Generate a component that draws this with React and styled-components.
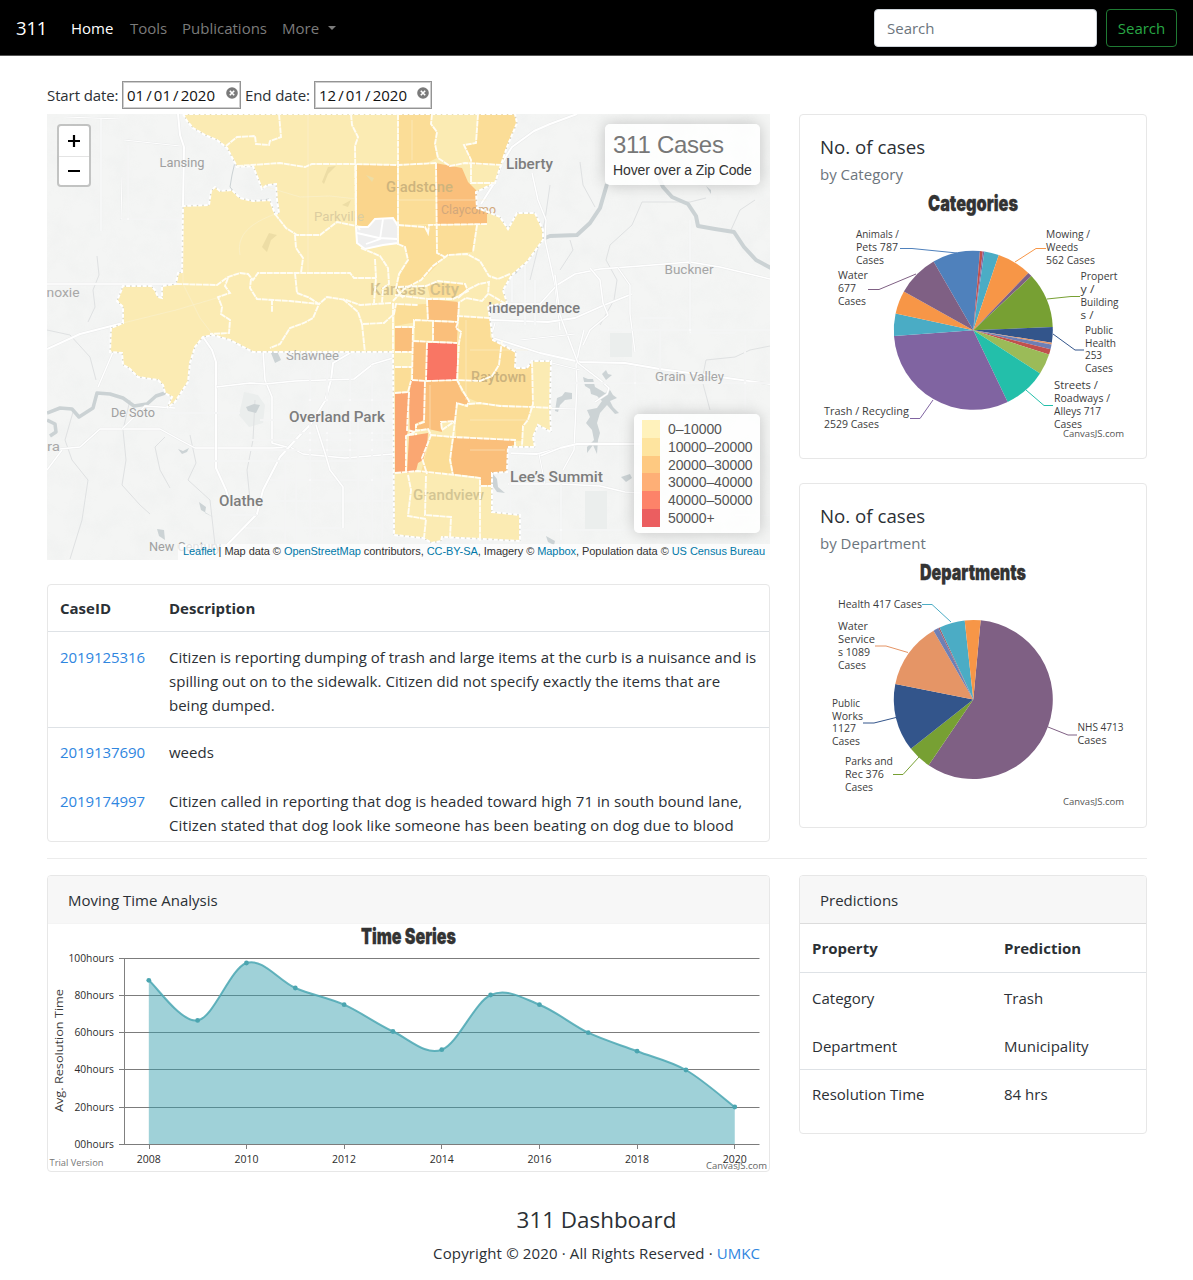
import React from "react";
import styled, { createGlobalStyle } from "styled-components";

const GlobalStyle = createGlobalStyle`
  *, *::before, *::after { box-sizing: border-box; }
  body {
    margin: 0;
    background: #fff;
    color: #2b3035;
    font-family: "Open Sans", "Noto Sans", sans-serif;
    font-size: 15px;
    line-height: 24px;
  }
`;

/* ---------- navigation ---------- */
const Nav = styled.nav`
  display: flex;
  align-items: center;
  height: 56px;
  padding: 0 16px;
  background: #000;
  border-bottom: 1px solid #555;
`;
const Brand = styled.a`
  width: 55px;
  color: #fff;
  font-size: 18.5px;
  letter-spacing: -0.2px;
`;
const NavLinks = styled.div`
  display: flex;
  gap: 16px;
  flex: 1;
`;
const NavLink = styled.a`
  width: ${(p) => p.$w}px;
  white-space: nowrap;
  color: ${(p) => (p.$active ? "#fff" : "#7b7b7b")};
`;
const Caret = styled.span`
  display: inline-block;
  margin-left: 9px;
  vertical-align: 4px;
  border: 4px solid transparent;
  border-top-color: #7b7b7b;
  border-bottom: 0;
`;
const SearchInput = styled.input`
  width: 223px;
  height: 38px;
  margin-right: 9px;
  padding: 0 12px;
  border: 1px solid #ced4da;
  border-radius: 4px;
  font: inherit;
  &::placeholder { color: #6c757d; opacity: 1; }
`;
const SearchButton = styled.button`
  width: 71px;
  height: 38px;
  padding: 0;
  border: 1px solid #1f7a33;
  border-radius: 4px;
  background: transparent;
  color: #28a745;
  font: inherit;
`;

/* ---------- page layout ---------- */
const Page = styled.main`
  padding: 24px 46px 0 47px;
`;
const DateRow = styled.div`
  display: flex;
  align-items: center;
  height: 34px;
  padding-bottom: 4px;
  gap: 4px;
  white-space: nowrap;
`;
const DateLabel = styled.span`
  width: ${(p) => p.$w}px;
  letter-spacing: -0.1px;
`;
const DateBox = styled.div`
  display: flex;
  align-items: center;
  width: ${(p) => p.$w}px;
  height: 28px;
  padding: 0 2px 0 4px;
  border: 1px solid #949494;
  outline: 1px solid #cfcfcf;
  outline-offset: -2px;
  color: #111;
  word-spacing: -1.8px;
`;
const ClearIcon = styled.svg`
  margin-left: auto;
  margin-top: -5px;
`;
const Columns = styled.div`
  display: grid;
  grid-template-columns: 723px 348px;
  column-gap: 29px;
  align-items: start;
`;
const Stack = styled.div`
  display: flex;
  flex-direction: column;
  gap: 24px;
`;
const Divider = styled.hr`
  height: 1px;
  margin: 16px 0;
  border: 0;
  background: #ececec;
`;
const Card = styled.section`
  height: ${(p) => p.$h}px;
  border: 1px solid #e7e7e7;
  border-radius: 4px;
  background: #fff;
  overflow: hidden;
`;
const CardHeader = styled.header`
  height: 48px;
  padding: 12px 20px;
  background: #f7f7f7;
  border-bottom: 1px solid ${(p) => p.$line || "#f4f4f4"};
`;
const CardTitle = styled.h5`
  margin: 0;
  padding: 20px 20px 0;
  font-size: 18.7px;
  font-weight: 400;
  line-height: 24px;
`;
const CardSubtitle = styled.h6`
  margin: 3px 0 1px;
  padding: 0 20px;
  color: #6c757d;
  font-size: 15px;
  font-weight: 400;
  line-height: 24px;
`;
const Drawing = styled.svg`
  display: block;
`;

/* ---------- map ---------- */
const MapFrame = styled.div`
  position: relative;
  height: 446px;
  overflow: hidden;
  font-family: "Liberation Sans", Arial, sans-serif;
`;
const ZoomControl = styled.div`
  position: absolute;
  left: 10px;
  top: 10px;
  width: 34px;
  border: 2px solid rgba(0, 0, 0, 0.2);
  border-radius: 4px;
  background: #fff;
  background-clip: padding-box;
`;
const ZoomButton = styled.div`
  display: flex;
  align-items: center;
  justify-content: center;
  height: ${(p) => p.$h}px;
  padding-bottom: 1px;
  & + & { border-top: 1px solid #e4e4e4; }
`;
const Panel = styled.div`
  position: absolute;
  border-radius: 5px;
  background: rgba(255, 255, 255, 0.84);
  box-shadow: 0 0 15px rgba(0, 0, 0, 0.2);
`;
const InfoPanel = styled(Panel)`
  right: 10px;
  top: 10px;
  width: 155px;
  height: 61px;
  padding: 6px 8px;
  color: #333;
  font-size: 14px;
  line-height: 19px;
  letter-spacing: -0.1px;
  white-space: nowrap;
`;
const InfoTitle = styled.h4`
  margin: 0 0 2px;
  color: #777;
  font-size: 24px;
  font-weight: 400;
  line-height: 29px;
  letter-spacing: -0.25px;
`;
const Legend = styled(Panel)`
  right: 10px;
  bottom: 27px;
  width: 126px;
  height: 119px;
  padding: 6px 8px;
  color: #555;
  font-size: 14px;
  line-height: 18px;
  letter-spacing: -0.1px;
  white-space: nowrap;
`;
const LegendRow = styled.div`
  display: flex;
  gap: 8px;
  height: 17.8px;
`;
const Swatch = styled.i`
  flex: none;
  width: 18px;
  background: ${(p) => p.$color};
  opacity: 0.7;
`;
const Attribution = styled.div`
  position: absolute;
  right: 0;
  bottom: 0;
  height: 16px;
  padding: 0 5px;
  background: rgba(255, 255, 255, 0.7);
  color: #333;
  font-size: 11px;
  line-height: 15px;
  letter-spacing: -0.055px;
  white-space: nowrap;
`;
const MapLink = styled.a`
  color: #0078a8;
`;

/* ---------- tables ---------- */
const Table = styled.div`
  display: flex;
  flex-direction: column;
`;
const Row = styled.div`
  display: grid;
  grid-template-columns: ${(p) => p.$first}px 1fr;
  padding: ${(p) => p.$top ?? 12}px 12px ${(p) => p.$bottom ?? 12}px;
  border-top: 1px solid ${(p) => (p.$line ? "#dee2e6" : "transparent")};
  font-weight: ${(p) => (p.$head ? 700 : 400)};
  letter-spacing: ${(p) => (p.$head ? -0.15 : 0)}px;
`;
const CaseLink = styled.a`
  color: #2f86df;
  letter-spacing: ${(p) => p.$ls || 0}px;
`;
const Text = styled.span`
  white-space: pre;
  margin-right: -12px;
  letter-spacing: ${(p) => p.$ls || 0}px;
`;
const Line = styled.span`
  display: block;
  letter-spacing: ${(p) => p.$ls}px;
`;

/* ---------- footer ---------- */
const Footer = styled.footer`
  padding-top: 33px;
  text-align: center;
  letter-spacing: 0.14px;
`;
const FooterTitle = styled.h4`
  margin: 0 0 7px;
  font-size: 22.4px;
  font-weight: 400;
  line-height: 29px;
  letter-spacing: 0;
`;

/* ---------- map data ---------- */
const LIGHT = "#fbebb3";
const MID = "#fbdd97";
const MID2 = "#fad58c";
const ORANGE = "#fabf7b";
const DEEP = "#faa772";
const RED = "#f97664";

const COVERAGE =
  "183,114 187,121 193,128 205,135 217,140 227,148 235,163 237,167 253,166 262,189 267,185 276,184 277,200 279,213 275,214 270,200 253,201 240,198 232,190 220,191 215,187 211,191 209,205 183,206 182,272 178,273 176,284 162,286 162,298 158,297 155,290 151,286 123,286 117,301 123,307 123,323 111,328 110,352 122,353 123,365 129,368 138,377 158,380 163,385 165,393 172,397 167,408 175,402 188,382 190,363 195,347 203,337 213,335 230,340 253,352 393,352 394,535 423,538 432,543 441,541 442,537 520,541 520,515 492,512 492,473 507,472 508,447 535,447 533,437 538,425 551,432 550,408 551,361 532,361 527,368 515,368 516,352 493,340 490,318 488,306 507,303 503,290 512,275 527,262 543,240 543,230 535,213 517,213 508,229 500,217 488,212 477,208 476,192 495,183 501,165 507,147 517,123 515,114";

const DISTRICTS = [
  [MID, "398,114 432,114 431,124 437,134 435,146 437,158 425,164 398,165"],
  [MID, "478,114 515,114 517,123 507,147 502,165 471,165 464,145 476,144"],
  [MID2, "357,165 397,165 397,221 375,218 368,227 357,225"],
  [MID, "399,165 435,163 437,224 399,225"],
  [ORANGE, "435,163 462,168 468,182 477,191 477,208 487,213 487,224 437,224 437,173"],
  [MID, "398,226 437,225 437,253 445,257 425,277 410,287 397,287 400,275 408,260 405,248 398,244"],
  [MID, "437,225 477,225 473,252 458,253 447,257 437,254"],
  [MID, "427,284 464,283 468,288 458,297 430,297"],
  [MID, "395,305 427,304 427,320 395,326"],
  [ORANGE, "428,299 459,302 457,321 428,320"],
  [MID, "415,321 432,321 432,342 415,341"],
  [ORANGE, "433,322 458,322 457,342 433,341"],
  [ORANGE, "395,327 413,328 412,352 395,352"],
  [ORANGE, "413,342 426,342 426,380 412,380"],
  [RED, "427,343 457,343 457,380 426,380"],
  [MID, "395,367 411,367 410,392 395,392"],
  [DEEP, "395,393 408,393 408,430 406,440 406,473 395,473"],
  [DEEP, "411,380 425,381 424,420 415,424 415,430 410,436 409,400"],
  [DEEP, "409,436 428,433 427,447 423,460 418,463 416,471 407,473"],
  [ORANGE, "425,381 457,381 461,391 469,401 467,406 457,403 455,421 441,422 442,432 428,429 416,429 416,424 424,422"],
  [MID, "459,316 490,318 490,337 493,340 516,352 515,368 527,368 532,361 534,405 528,407 480,403 468,398 460,388 458,370"],
  [MID, "469,404 530,407 530,418 523,427 522,441 456,436 455,420 458,404"],
  [MID, "430,436 453,437 452,475 421,473 424,460 427,450"],
  [ORANGE, "454,437 514,440 514,445 508,447 507,472 492,473 491,485 481,486 480,477 453,474 451,455"],
];

const BORDERS = [
  "279,114 281,137 270,141 269,145 256,144 255,136 237,137 226,146",
  "351,114 352,125 358,137 355,146 356,225 360,230",
  "237,166 280,163 305,167 312,164 350,164 398,165 437,163",
  "398,114 398,245",
  "432,114 431,124 437,132 435,144 438,158 450,166 465,163 503,165",
  "478,114 476,143 464,145 471,160 471,183 495,183",
  "356,164 356,225",
  "436,163 437,253 445,257",
  "398,225 425,227 428,233 429,225 487,224",
  "477,225 473,252",
  "275,214 286,228 297,235 320,235 337,222 356,226",
  "295,235 296,248 303,258 301,273",
  "176,284 217,285 228,277 240,273 248,274 253,280 258,273 350,273 354,278 376,278",
  "295,273 297,293 308,297 319,304 313,318 304,323 290,328 280,344 270,348",
  "228,278 225,286 230,293 218,297 222,307 221,314 230,320 229,333 210,334",
  "251,279 250,288 257,299 290,301 319,304 327,297 346,300 360,305 391,303",
  "272,299 272,312",
  "361,248 380,256 388,268 389,284 383,288 382,303",
  "375,259 376,278 374,303",
  "343,299 358,312 362,324 384,323 394,314 396,304 418,305",
  "362,324 365,353",
  "393,303 393,353",
  "510,274 498,279 489,276 480,261 467,254 448,255 433,266 421,280 404,289 393,301",
  "398,287 426,286 438,281 465,284 468,291 453,299 428,299 395,295",
  "398,244 405,247 408,260 399,274 396,288 403,298",
  "458,298 467,290 479,284 489,282 488,294 482,301 466,298 458,303",
  "489,294 506,304",
  "427,300 428,321",
  "459,302 458,322 456,328 461,332 459,343 457,380 463,391 469,401 467,406 457,403 455,421 441,422 442,430",
  "395,327 414,327 414,320 458,322",
  "457,316 490,318",
  "413,328 412,380",
  "433,321 433,342",
  "413,341 457,343",
  "427,343 426,380",
  "412,380 427,381 457,380 480,381 492,376 499,365 502,340",
  "395,352 412,352",
  "395,367 412,367",
  "395,393 408,392 411,381",
  "409,392 407,430 415,432 406,436 406,473",
  "425,381 424,422 416,425 416,431 428,429 431,435 422,458 427,474",
  "395,473 418,471 455,475 480,478 480,541",
  "408,435 417,434",
  "430,435 453,437 515,440 515,446",
  "442,430 455,421 453,437 450,460 453,475",
  "469,404 480,403 500,406 534,407 552,408",
  "532,361 533,404 528,420 523,426 522,446",
  "426,476 425,515 451,517 450,538",
  "408,475 411,490 408,516 426,519 424,538",
  "481,486 492,486",
];

const ROADS = [
  [2, "47,349 80,334 123,323 176,310 220,297"],
  [1.5, "47,284 176,284"],
  [1.2, "101,118 101,231 M65,117 120,119"],
  [1, "124,140 180,146 M122,177 121,219 180,219 M128,145 128,220"],
  [2, "178,114 180,135 184,147 183,206"],
  [1.4, "60,449 80,447 100,429 160,429 180,440 195,448 273,448 290,447 303,454 345,458 393,454"],
  [2, "203,337 212,350 216,362 216,468 226,490 229,500"],
  [1.6, "263,350 265,380 272,397 272,443 290,448"],
  [2, "350,353 333,363 331,380 325,401 310,425 300,435 280,457 263,490 257,514 222,550"],
  [1.6, "216,387 250,383 265,384 295,381 354,379 373,364 393,358"],
  [1.2, "165,413 240,413 M202,461 393,461 M270,501 393,501 M245,528 343,528 M230,515 257,515"],
  [1, "310,370 310,540 M327,360 327,461 M350,356 350,460 M372,365 372,540 M290,433 393,433 M260,420 393,420 M308,400 393,400 M250,440 390,440 M270,480 390,480 M240,450 393,450"],
  [1.6, "316,425 325,453 330,470 343,487 343,528"],
  [1, "296,460 296,545 M285,460 285,545 M358,420 358,540 M382,400 382,540"],
  [1.4, "47,470 62,450 M98,387 113,352 M122,429 145,406 175,408"],
  [2, "577,114 550,124 534,131 512,147 502,163 495,182 481,204"],
  [1.4, "532,173 538,200 546,220 545,240 555,285 560,330"],
  [1.5, "495,304 540,304 557,285 575,274 600,269 640,266 690,262 720,267 770,279"],
  [1.8, "460,319 548,322 575,318 602,306 632,294"],
  [1.5, "590,268 600,280 603,303 608,315 590,330 583,345"],
  [1.3, "618,268 630,285 630,314 635,352"],
  [1.8, "493,338 540,353 580,362 625,363 660,369 720,377 770,384"],
  [1.4, "584,330 579,350 576,365 577,383 574,450 563,470"],
  [1.5, "555,275 560,315 573,350 578,363 600,380 609,388 607,394 595,402"],
  [1.8, "500,453 537,454 560,448 577,444 640,444"],
  [1.6, "560,448 540,456 M508,484 560,484 600,486 625,492 640,493"],
  [1.1, "561,484 561,540 M539,454 545,484 M500,530 640,530 M640,318 675,318 M690,220 690,333 M690,333 735,333 M600,330 770,330 M535,408 575,409"],
  [1, "570,383 770,383 M635,366 635,415 M660,330 660,415 M510,430 510,530 M540,360 580,370 M735,515 770,515 M745,335 745,412"],
  [1.2, "512,275 512,302 M525,265 525,325 M535,280 535,325 M495,323 490,340 M520,340 575,334"],
];

const RIVERS = [
  [4, "607,184 600,208 590,223 577,235 550,236 540,240 532,252 514,273"],
  [4, "656,171 663,187 672,197 688,204 696,216 698,226 715,229 734,232 744,247 756,260 771,268"],
  [3.5, "47,413 60,408 72,409 79,417 93,408 97,393 110,394 123,398 134,406 147,404 156,396 165,393"],
  [3.5, "47,420 55,424 56,432 50,436"],
  [1, "235,162 232,175 230,187 240,199 255,201 269,199"],
];

const STREAMS = [
  "97,256 99,275 93,290 95,307 88,322",
  "47,330 70,335 90,357 96,380",
  "73,412 65,440 72,460 88,480 82,520 70,559",
  "130,400 123,430 126,460 122,485 140,505 150,514",
  "190,435 196,463 188,480 210,500 215,545",
  "165,437 155,447 160,470 170,488",
  "255,400 253,440 247,470 250,500",
  "580,162 583,185 595,207",
  "706,198 690,202 642,202 632,225 610,245 606,260 617,280 614,300 600,325",
  "550,185 545,220 530,280",
  "731,230 740,210 755,200",
  "770,346 750,350 735,357 706,360 702,380 710,410",
  "570,240 573,250 560,270",
];

const LAKES = [
  "583,377 588,379 593,379 595,387 602,391 605,393 610,390 613,395 617,398 610,401 613,407 619,413 615,414 607,405 600,413 597,423 600,433 598,440 597,454 593,445 587,453 587,447 594,440 592,430 586,423 590,417 587,410 597,408 602,401 597,396 591,394 590,389 585,386",
  "555,411 557,398 562,396 565,392 572,393 572,399 565,400 560,405 558,412",
  "602,374 606,370 608,374 612,375 606,380",
  "493,474 497,479 498,487 505,493 497,492 492,485",
  "269,348 277,351 281,360 275,363",
  "246,407 254,404 260,405 256,413 248,411",
  "199,502 206,507 205,513 213,517 208,514 201,510",
  "157,529 164,530 165,540 159,536",
  "546,536 555,541 554,545 548,542",
  "621,477 630,474 632,478 626,482",
  "706,186 711,190 711,194",
  "178,449 183,451 189,448 187,452 182,454",
];

const PLACES = [
  ["Lansing", 159.5, 167, 45, 13, 400, "#a0a0a0"],
  ["noxie", 46.5, 296.5, 33, 12.5, 400, "#a8a8a8"],
  ["De Soto", 111, 416.5, 44, 12.5, 400, "#a0a0a0"],
  ["ra", 47, 450.5, 13, 12.5, 400, "#a8a8a8"],
  ["Shawnee", 286, 359.5, 53, 12.5, 400, "#a5a5a5"],
  ["New Century", 149, 550.5, 72, 12.5, 400, "#a0a0a0"],
  ["Overland Park", 289, 422, 96, 14.5, 500, "#7d7d7d"],
  ["Olathe", 219, 506, 44, 14.5, 500, "#7d7d7d"],
  ["Liberty", 506, 169, 47, 14.5, 500, "#7d7d7d"],
  ["Independence", 488, 312.5, 92, 14.5, 500, "#7d7d7d"],
  ["Buckner", 664.5, 274, 49, 13, 400, "#a5a5a5"],
  ["Grain Valley", 655, 381, 69, 13, 400, "#a5a5a5"],
  ["Lee’s Summit", 510, 481.5, 93, 14.5, 500, "#7d7d7d"],
  ["Parkville", 314, 221, 50, 12.5, 400, "#dccda0"],
  ["Gladstone", 386, 192, 67, 14, 500, "#cdb47d"],
  ["Claycomo", 441, 214, 55, 12.5, 400, "#d2a87b"],
  ["Kansas City", 370, 295, 89, 17, 500, "#d3c08c"],
  ["Raytown", 471, 382, 55, 14, 500, "#cbb27d"],
  ["Grandview", 413, 500, 71, 14, 500, "#d3c594"],
];

const LEGEND = [
  ["#FFEDA0", "0–10000"],
  ["#FED976", "10000–20000"],
  ["#FEB24C", "20000–30000"],
  ["#FD8D3C", "30000–40000"],
  ["#FC4E2A", "40000–50000"],
  ["#E31A1C", "50000+"],
];

function MapView() {
  return (
    <MapFrame>
      <Drawing width="723" height="446" viewBox="47 114 723 446">
        <defs>
          <filter id="terrain" x="0" y="0" width="100%" height="100%">
            <feTurbulence type="fractalNoise" baseFrequency="0.045" numOctaves="4" seed="7" />
            <feColorMatrix values="0 0 0 0 0.78  0 0 0 0 0.8  0 0 0 0 0.8  0.9 0 0 0 -0.36" />
          </filter>
        </defs>
        <rect x="47" y="114" width="723" height="446" fill="#f4f5f4" />
        <rect x="47" y="114" width="723" height="446" filter="url(#terrain)" opacity="0.45" />
        <path d="M585 491h22v38h-22zM610 333h22v24h-22zM244 392l14 3 7 10-2 18-14 4-10-12z" fill="#ebeeed" />
        {STREAMS.map((d) => (
          <path key={d} d={"M" + d} fill="none" stroke="#dfe1e2" strokeWidth="1" />
        ))}
        {RIVERS.map(([w, d]) => (
          <path key={d} d={"M" + d} fill="none" stroke="#cbd2d4" strokeWidth={w} strokeLinejoin="round" />
        ))}
        {LAKES.map((p) => (
          <polygon key={p} points={p} fill="#ccd3d5" />
        ))}
        {ROADS.map(([w, d]) => (
          <g key={d} fill="none" strokeLinejoin="round">
            <path d={"M" + d} stroke="#e9eaea" strokeWidth={w + 1} />
            <path d={"M" + d} stroke="#fff" strokeWidth={w} />
          </g>
        ))}
        <polygon points={COVERAGE} fill={LIGHT} />
        {DISTRICTS.map(([c, p]) => (
          <polygon key={p} points={p} fill={c} />
        ))}
        <g fill="none" stroke="#f8f2d8" strokeWidth="0.8" opacity="0.6">
          <path d="M123 323L176 310 220 297M183 210V284L200 318 213 335M260 185L300 197 330 196 357 199M240 255C235 230 260 220 275 214M308 114V273M398 200H487M412 120V160M466 320V400M470 350H528M430 385V430M470 420H528M470 450H505" />
        </g>
        <path d="M322 182l6-15 8-1-8 8-4 10zM262 247l7-14 8 2-6 5-4 12zM342 205l9-5-3 7zM366 175l8 3-2 4z" fill="#eddda5" />
        <polygon
          points="356,227 368,227 375,219 393,218 398,226 398,243 383,245 365,249 357,243"
          fill="#efefef"
          stroke="#fff"
          strokeWidth="2"
        />
        <path d="M357 233l22 5 18 1M383 219l-3 20-14 5" fill="none" stroke="#fff" strokeWidth="1.8" />
        {PLACES.map(([t, x, y, w, s, wt, c]) => (
          <text
            key={t}
            x={x}
            y={y}
            textLength={w}
            lengthAdjust="spacingAndGlyphs"
            fontFamily="Roboto, sans-serif"
            fontSize={s}
            fontWeight={wt}
            fill={c}
          >
            {t}
          </text>
        ))}
        <polygon points={COVERAGE} fill="none" stroke="#c9cdcd" strokeWidth="0.8" />
        <polygon points={COVERAGE} fill="none" stroke="#fff" strokeWidth="2" strokeDasharray="4 1.5" />
        {BORDERS.map((p) => (
          <polyline key={p} points={p} fill="none" stroke="#fffdf4" strokeWidth="1.9" strokeDasharray="6 0.7" />
        ))}
      </Drawing>
      <ZoomControl>
        <ZoomButton $h={30}>
          <svg width="12" height="12" viewBox="0 0 12 12" stroke="#000" strokeWidth="2.2">
            <path d="M0 6H12M6 0V12" />
          </svg>
        </ZoomButton>
        <ZoomButton $h={29}>
          <svg width="12" height="12" viewBox="0 0 12 12" stroke="#000" strokeWidth="2">
            <path d="M0 6H12" />
          </svg>
        </ZoomButton>
      </ZoomControl>
      <InfoPanel>
        <InfoTitle>311 Cases</InfoTitle>
        Hover over a Zip Code
      </InfoPanel>
      <Legend>
        {LEGEND.map(([c, t]) => (
          <LegendRow key={t}>
            <Swatch $color={c} />
            {t}
          </LegendRow>
        ))}
      </Legend>
      <Attribution>
        <MapLink>Leaflet</MapLink> | Map data © <MapLink>OpenStreetMap</MapLink> contributors,{" "}
        <MapLink>CC-BY-SA</MapLink>, Imagery © <MapLink>Mapbox</MapLink>, Population data ©{" "}
        <MapLink>US Census Bureau</MapLink>
      </Attribution>
    </MapFrame>
  );
}

/* ---------- charts ---------- */
const CHART_FONT = '"Open Sans", "Noto Sans", sans-serif';

function ChartTitle({ x, y, w, children }) {
  return (
    <text
      x={x}
      y={y}
      textLength={w}
      lengthAdjust="spacingAndGlyphs"
      fontFamily="Inter, sans-serif"
      fontSize="21.5"
      fontWeight="900"
      fill="#333"
      stroke="#333"
      strokeWidth="0.3"
    >
      {children}
    </text>
  );
}

function ChartText({ x, y, w, size = 10.2, color = "#3c3c3c", children }) {
  return (
    <text
      x={x}
      y={y}
      textLength={w}
      lengthAdjust="spacingAndGlyphs"
      fontFamily={CHART_FONT}
      fontSize={size}
      fill={color}
    >
      {children}
    </text>
  );
}

const CX = 973.3;
const R = 79.5;

function slice(cy, from, to) {
  const at = (deg) => {
    const a = (deg * Math.PI) / 180;
    return `${(CX + R * Math.sin(a)).toFixed(2)} ${(cy - R * Math.cos(a)).toFixed(2)}`;
  };
  return `M${CX} ${cy}L${at(from)}A${R} ${R} 0 ${to - from > 180 ? 1 : 0} 1 ${at(to)}Z`;
}

const CATEGORIES = {
  title: ["Categories", 928, 211, 90],
  cy: 330.3,
  slices: [
    [-30, 4.8, "#4f81bc"], [4.8, 6.9, "#c0504e"], [6.9, 8, "#8064a1"], [8, 18.7, "#4bacc5"],
    [18.7, 43.8, "#f79647"], [43.8, 47, "#7f6084"], [47, 87.6, "#77a033"], [87.6, 99, "#33558b"],
    [99, 100.2, "#e59566"], [100.2, 103.7, "#6e7fb5"], [103.7, 107.7, "#c0504e"],
    [107.7, 122.9, "#9bbb58"], [122.9, 154.4, "#23bfaa"], [154.4, 265.9, "#8064a1"],
    [265.9, 282.2, "#4aacc5"], [282.2, 299.2, "#f79647"], [299.2, 330, "#7f6084"],
  ],
  leaders: [
    ["#4f81bc", "900,248.5 912,248.5 957,253"], ["#7f6084", "868,289.5 879,289.5 916,274"],
    ["#f79647", "1046,248.5 1036,248.5 1015,262"], ["#77a033", "1080,296.5 1071,296.5 1047,299"],
    ["#33558b", "1084,350 1075,350 1053,334"], ["#23bfaa", "1053,405.5 1044,405.5 1026,390"],
    ["#8064a1", "910,418.5 920,418.5 933,400"],
  ],
  labels: [
    ["Animals /", 856, 238, 43], ["Pets 787", 856, 251, 42], ["Cases", 856, 264, 28],
    ["Water", 838, 278.5, 30], ["677", 838, 291.5, 18], ["Cases", 838, 304.5, 28],
    ["Mowing /", 1046, 238, 44], ["Weeds", 1046, 251, 32], ["562 Cases", 1046, 264, 49],
    ["Propert", 1080.5, 279.5, 37], ["y /", 1080.5, 292.5, 14], ["Building", 1080.5, 305.5, 38], ["s /", 1080.5, 318.5, 13],
    ["Public", 1085, 333.5, 28], ["Health", 1085, 346.5, 31], ["253", 1085, 359, 17], ["Cases", 1085, 372, 28],
    ["Streets /", 1054, 388.5, 44], ["Roadways /", 1054, 401.5, 56], ["Alleys 717", 1054, 414.5, 47], ["Cases", 1054, 427.5, 28],
    ["Trash / Recycling", 824, 414.5, 85], ["2529 Cases", 824, 427.5, 55],
  ],
  credit: 437,
};

const DEPARTMENTS = {
  title: ["Departments", 920, 580, 106],
  cy: 699.5,
  slices: [
    [5.3, 214.2, "#7f6084"], [214.2, 231.7, "#77a033"], [231.7, 281.2, "#33558b"],
    [281.2, 330, "#e59566"], [330, 333.9, "#6e7fb5"], [333.9, 335, "#a0606c"],
    [335, 353.8, "#4bacc5"], [353.8, 365.3, "#f79647"],
  ],
  leaders: [
    ["#4bacc5", "922,604.5 932,604.5 951,622"], ["#e59566", "875,646 886,646 908,652.5"],
    ["#33558b", "863,723 874,723 896,717.5"], ["#77a033", "893,774.5 903,774.5 919,757"],
    ["#7f6084", "1077,735 1068,735 1048,727"],
  ],
  labels: [
    ["Health 417 Cases", 838, 607.5, 84],
    ["Water", 838, 630, 30], ["Service", 838, 643, 37], ["s 1089", 838, 656, 32], ["Cases", 838, 669, 28],
    ["Public", 832, 706.5, 28], ["Works", 832, 719.5, 31], ["1127", 832, 732, 24], ["Cases", 832, 745, 28],
    ["Parks and", 845, 765, 48], ["Rec 376", 845, 778, 39], ["Cases", 845, 790.5, 28],
    ["NHS 4713", 1077.5, 731, 46], ["Cases", 1077.5, 744, 29],
  ],
  credit: 805,
};

function PieChart({ data, top }) {
  const [title, tx, ty, tw] = data.title;
  return (
    <Drawing width="345" height="270" viewBox={`800 ${top} 345 270`}>
      <ChartTitle x={tx} y={ty} w={tw}>{title}</ChartTitle>
      {data.slices.map(([a, b, c]) => (
        <path key={a} d={slice(data.cy, a, b)} fill={c} />
      ))}
      {data.leaders.map(([c, p]) => (
        <polyline key={p} points={p} fill="none" stroke={c} strokeWidth="1" />
      ))}
      {data.labels.map(([t, x, y, w]) => (
        <ChartText key={x + "-" + y} x={x} y={y} w={w}>{t}</ChartText>
      ))}
      <ChartText x={1063} y={data.credit} w={61} size={9} color="#555">CanvasJS.com</ChartText>
    </Drawing>
  );
}

const SERIES = [980.3, 1020.4, 963, 988, 1004.7, 1031.5, 1049.7, 995, 1004.7, 1032.7, 1051.2, 1070, 1107];
const POINTS = SERIES.map((y, i) => [148.8 + i * 48.83, y]);

function curve(pts) {
  return pts.slice(1).reduce((d, p, i) => {
    const a = pts[Math.max(i - 1, 0)];
    const b = pts[i];
    const c = pts[Math.min(i + 2, pts.length - 1)];
    return `${d}C${b[0] + (p[0] - a[0]) / 6} ${b[1] + (p[1] - a[1]) / 6} ${p[0] - (c[0] - b[0]) / 6} ${p[1] - (c[1] - b[1]) / 6} ${p[0]} ${p[1]}`;
  }, `M${pts[0][0]} ${pts[0][1]}`);
}

function TimeSeries() {
  const line = curve(POINTS);
  return (
    <Drawing width="721" height="247" viewBox="48 924 721 247">
      <ChartTitle x={361} y={944} w={95}>Time Series</ChartTitle>
      {[100, 80, 60, 40, 20, 0].map((v) => {
        const y = Math.round(1144 - v * 1.865) + 0.5;
        const label = (v === 0 ? "00" : v) + "hours";
        return (
          <g key={v}>
            <path d={`M119 ${y}H759.5`} stroke="#7c7c7c" strokeWidth="1.2" />
            <ChartText x={v === 100 ? 68.5 : 74.5} y={y + 3.5} w={v === 100 ? 45.5 : 39.5} size={11} color="#2c2c2c">
              {label}
            </ChartText>
          </g>
        );
      })}
      <path d="M124.5 958V1145" stroke="#808080" />
      <path d={`${line}V1144H${POINTS[0][0]}Z`} fill="#369ead" fillOpacity="0.48" />
      <path d={line} fill="none" stroke="#4ba7b3" strokeOpacity="0.85" strokeWidth="2" />
      {POINTS.map(([x, y]) => (
        <circle key={x} cx={x} cy={y} r="2.4" fill="#4ba5b0" />
      ))}
      {[2008, 2010, 2012, 2014, 2016, 2018, 2020].map((t, i) => (
        <g key={t}>
          <path d={`M${Math.round(148.5 + i * 97.66) + 0.5} 1144V1149`} stroke="#808080" />
          <ChartText x={136.8 + i * 97.66} y={1163} w={24} size={11} color="#2c2c2c">{t}</ChartText>
        </g>
      ))}
      <g transform="translate(62.5 1112) rotate(-90)">
        <ChartText x={0} y={0} w={123} size={11.5}>Avg. Resolution Time</ChartText>
      </g>
      <ChartText x={49.5} y={1166} w={54} size={9} color="#777">Trial Version</ChartText>
      <ChartText x={706} y={1168.5} w={61} size={9} color="#666">CanvasJS.com</ChartText>
    </Drawing>
  );
}

function DateField({ value, w }) {
  return (
    <DateBox $w={w}>
      {value}
      <ClearIcon width="12" height="12" viewBox="0 0 12 12">
        <circle cx="6" cy="6" r="5.8" fill="#7a7a7a" />
        <path d="M3.8 3.8L8.2 8.2M8.2 3.8L3.8 8.2" stroke="#fff" strokeWidth="1.6" />
      </ClearIcon>
    </DateBox>
  );
}

export default function App() {
  return (
    <>
      <GlobalStyle />
      <Nav>
        <Brand>311</Brand>
        <NavLinks>
          <NavLink $w={43} $active>Home</NavLink>
          <NavLink $w={36}>Tools</NavLink>
          <NavLink $w={84}>Publications</NavLink>
          <NavLink $w={60}>More<Caret /></NavLink>
        </NavLinks>
        <SearchInput placeholder="Search" />
        <SearchButton>Search</SearchButton>
      </Nav>
      <Page>
        <DateRow>
          <DateLabel $w={71}>Start date:</DateLabel>
          <DateField value="01 / 01 / 2020" w={119} />
          <DateLabel $w={65}>End date:</DateLabel>
          <DateField value="12 / 01 / 2020" w={118} />
        </DateRow>
        <Columns>
          <Stack>
            <MapView />
            <Card $h={258}>
              <Table>
                <Row $first={109} $head $top={10} $bottom={11}>
                  <Text>CaseID</Text>
                  <Text>Description</Text>
                </Row>
                <Row $first={109} $line $top={13} $bottom={10}>
                  <CaseLink $ls={-0.08}>2019125316</CaseLink>
                  <Text>
                    <Line $ls={0.01}>Citizen is reporting dumping of trash and large items at the curb is a nuisance and is</Line>
                    <Line $ls={0.03}>spilling out on to the sidewalk. Citizen did not specify exactly the items that are</Line>
                    <Line $ls={0}>being dumped.</Line>
                  </Text>
                </Row>
                <Row $first={109} $line>
                  <CaseLink $ls={-0.08}>2019137690</CaseLink>
                  <Text>weeds</Text>
                </Row>
                <Row $first={109}>
                  <CaseLink $ls={-0.08}>2019174997</CaseLink>
                  <Text>
                    <Line $ls={0.06}>Citizen called in reporting that dog is headed toward high 71 in south bound lane,</Line>
                    <Line $ls={0.1}>Citizen stated that dog look like someone has been beating on dog due to blood</Line>
                  </Text>
                </Row>
              </Table>
            </Card>
          </Stack>
          <Stack>
            <Card $h={345}>
              <CardTitle>No. of cases</CardTitle>
              <CardSubtitle>by Category</CardSubtitle>
              <PieChart data={CATEGORIES} top={187} />
            </Card>
            <Card $h={345}>
              <CardTitle>No. of cases</CardTitle>
              <CardSubtitle>by Department</CardSubtitle>
              <PieChart data={DEPARTMENTS} top={556} />
            </Card>
          </Stack>
        </Columns>
        <Divider />
        <Columns>
          <Card $h={297}>
            <CardHeader>Moving Time Analysis</CardHeader>
            <TimeSeries />
          </Card>
          <Card $h={259}>
            <CardHeader $line="#dcdcdc">Predictions</CardHeader>
            <Table>
              <Row $first={192} $head $top={11}>
                <Text>Property</Text>
                <Text>Prediction</Text>
              </Row>
              <Row $first={192} $line $top={13}>
                <Text>Category</Text>
                <Text>Trash</Text>
              </Row>
              <Row $first={192} $top={11} $bottom={11}>
                <Text>Department</Text>
                <Text>Municipality</Text>
              </Row>
              <Row $first={192} $line>
                <Text>Resolution Time</Text>
                <Text>84 hrs</Text>
              </Row>
            </Table>
          </Card>
        </Columns>
      </Page>
      <Footer>
        <FooterTitle>311 Dashboard</FooterTitle>
        Copyright © 2020 · All Rights Reserved · <CaseLink>UMKC</CaseLink>
      </Footer>
    </>
  );
}
